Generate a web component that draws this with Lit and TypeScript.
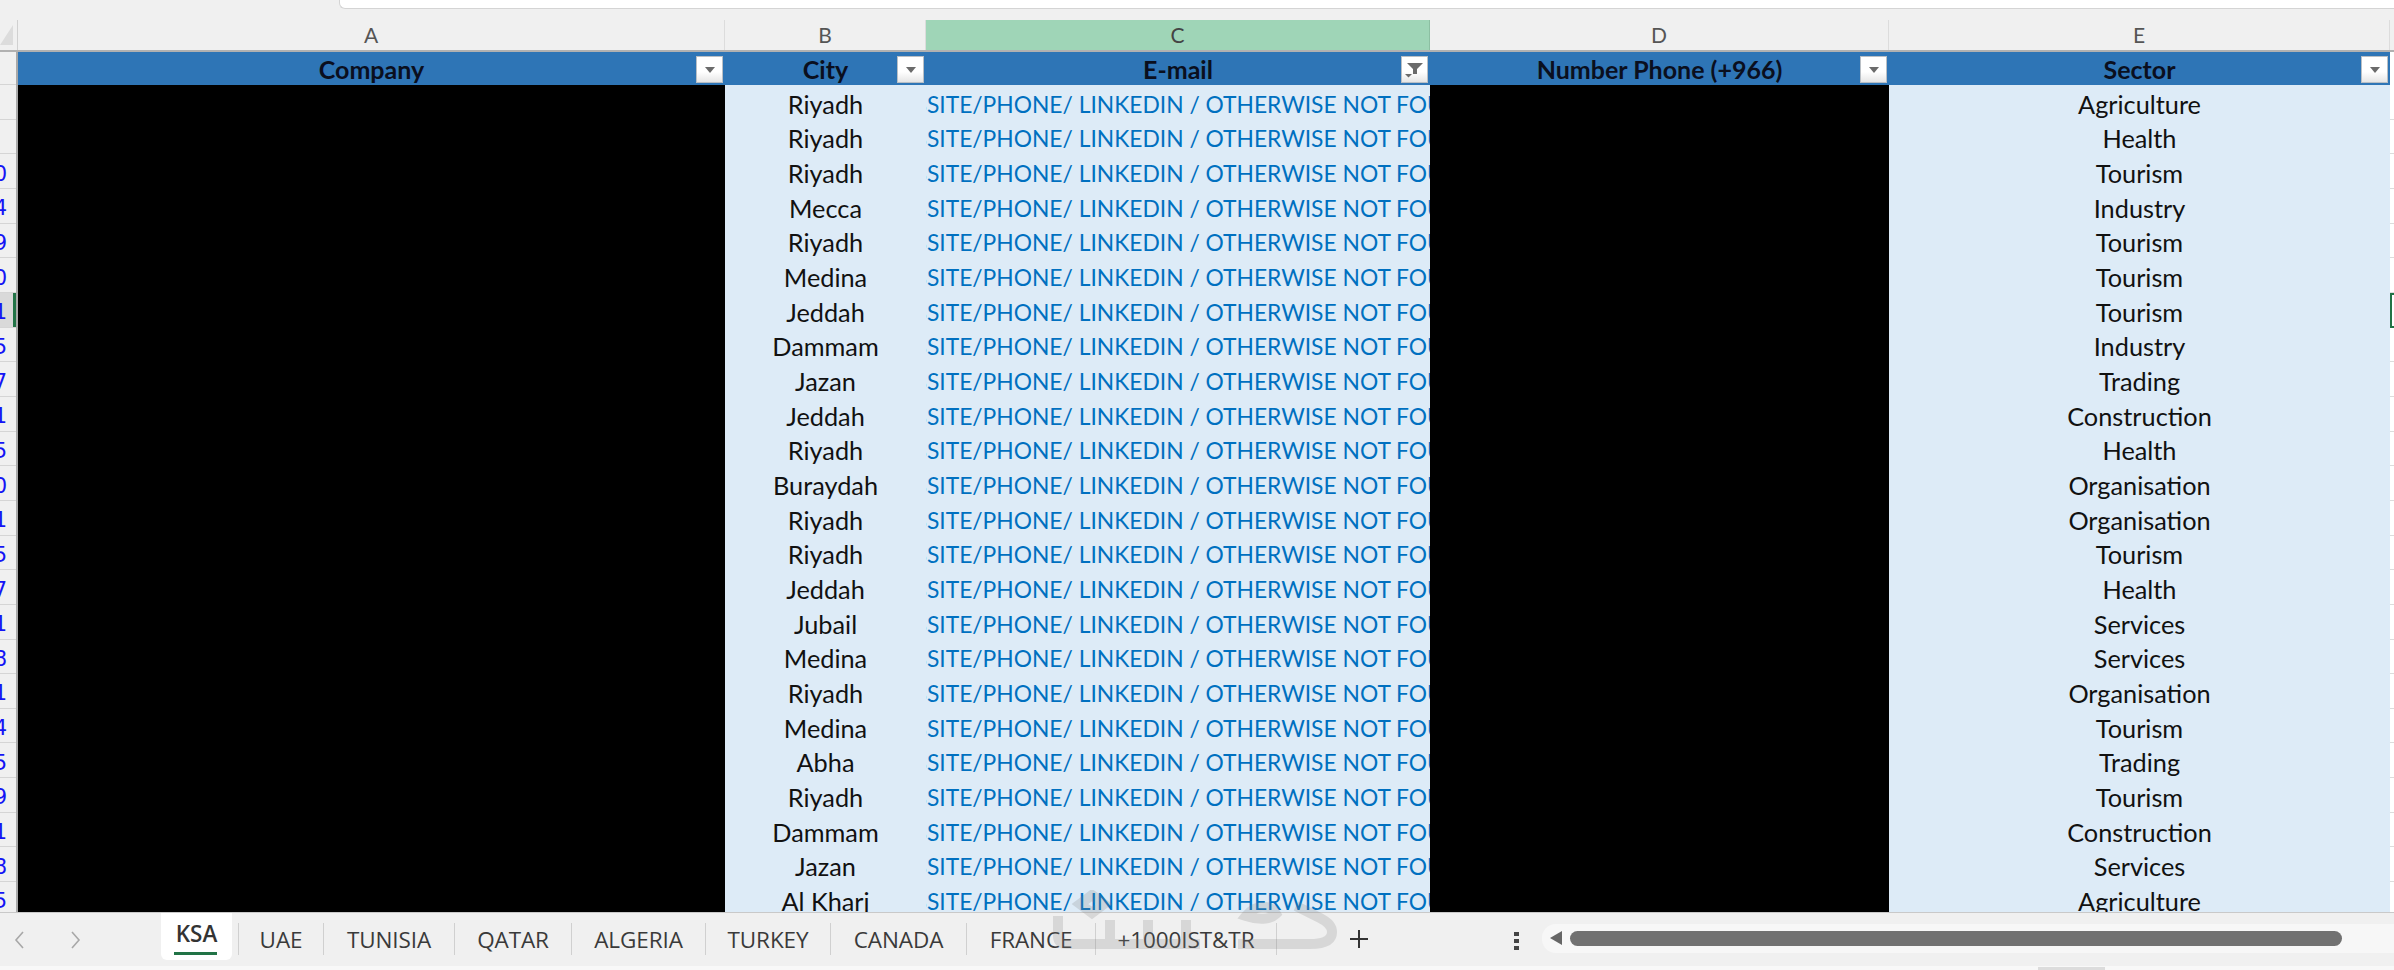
import { LitElement, html, css, svg } from "lit";
import { customElement } from "lit/decorators.js";

const cities = ["Riyadh","Riyadh","Riyadh","Mecca","Riyadh","Medina","Jeddah","Dammam","Jazan","Jeddah","Riyadh","Buraydah","Riyadh","Riyadh","Jeddah","Jubail","Medina","Riyadh","Medina","Abha","Riyadh","Dammam","Jazan","Al Kharj"];
const sectors = ["Agriculture","Health","Tourism","Industry","Tourism","Tourism","Tourism","Industry","Trading","Construction","Health","Organisation","Organisation","Tourism","Health","Services","Services","Organisation","Tourism","Trading","Tourism","Construction","Services","Agriculture"];
const nums = ["12","15","20","34","49","60","71","85","97","101","115","120","131","145","157","161","178","181","194","205","219","221","238","245"];
const tabs = [["UAE",85],["TUNISIA",131],["QATAR",117],["ALGERIA",134],["TURKEY",125],["CANADA",136],["FRANCE",129],["+1000IST&TR",182]] as const;

@customElement("app-root")
export class AppRoot extends LitElement {
  static styles = css`
    :host { display: block; width: 2394px; height: 970px; background: #f0f0f0; overflow: hidden; position: relative; font-family: Lato, "Liberation Sans", sans-serif; }
    .top { height: 20px; position: relative; }
    .formula { position: absolute; left: 339px; right: 0; top: 0; height: 9px; background: #fff; border: 1px solid #d4d4d4; border-top: 0; border-right: 0; border-bottom-left-radius: 6px; box-sizing: border-box; }
    .colhead { display: grid; grid-template-columns: 18px 707px 201px 504px 459px 501px 4px; height: 32px; border-bottom: 2px solid #b1b1b1; box-sizing: border-box; }
    .corner { position: relative; border-right: 1px solid #d0d0d0; box-sizing: border-box; }
    .tri { position: absolute; left: 0; top: 5px; width: 0; height: 0; border-left: 13px solid transparent; border-bottom: 20px solid #dcdcdc; }
    .ch { display: flex; align-items: center; justify-content: center; font-size: 21px; color: #555; border-right: 1px solid #dcdcdc; box-sizing: border-box; padding-bottom: 1px; }
    .ch.sel { background: #9fd5b7; color: #444; border-right-color: #8cbfa2; }
    .grid { display: grid; grid-template-columns: 18px 707px 201px 504px 459px 501px 4px; height: 860px; overflow: hidden; position: relative; }
    .hdr { height: 33px; background: #2e75b6; display: flex; align-items: center; justify-content: center; position: relative; font-weight: 700; font-size: 25px; color: #0a0f1e; box-sizing: border-box; }
    .edgehead { height: 33px; background: #fff; }
    .btn { position: absolute; right: 2px; top: 4px; width: 27px; height: 27px; box-sizing: border-box; background: linear-gradient(#fff 60%, #e6e6e6); border: 1px solid #b9bfc5; display: flex; align-items: center; justify-content: center; }
    .btn i { display: block; width: 0; height: 0; border-left: 5px solid transparent; border-right: 5px solid transparent; border-top: 6px solid #6b6b6b; }
    .btn svg { display: block; }
    .col { display: flex; flex-direction: column; min-width: 0; }
    .black { background: #000; }
    .blue { background: #ddebf7; }
    .rows { flex: 1; min-height: 0; overflow: hidden; }
    .cell { height: 34.67px; box-sizing: border-box; padding-top: 3px; display: flex; align-items: center; justify-content: center; white-space: nowrap; overflow: hidden; font-size: 25.3px; color: #111; }
    .cell.mail { color: #0070c0; font-size: 22.8px; }
    .rn { height: 34.67px; box-sizing: border-box; border-bottom: 1px solid #d5d5d5; font-family: "DejaVu Sans", sans-serif; font-size: 21px; color: #1414f5; display: flex; align-items: center; justify-content: flex-end; overflow: hidden; white-space: nowrap; padding-right: 9px; padding-top: 5px; }
    .rn.first { color: #66ccff; padding-right: 16px; }
    .rn.on { background: #d9d9d9; box-shadow: inset -3px 0 0 #217346; }
    .gutter { border-right: 2px solid #a9a9a9; width: 16px; }
    .gutter .rn { width: 16px; }
    .gutter .rn.head { height: 33px; }
    .edge { background: #fff; }
    .tick { height: 34.67px; box-sizing: border-box; border-bottom: 1px solid #dcdcdc; }
    .tick.on { border: 2px solid #217346; border-right: 0; box-shadow: -2px 0 0 #808080; }
    .sheet { position: absolute; left: 0; right: 0; top: 912px; height: 54px; border-top: 1px solid #c9c9c9; box-sizing: border-box; background: #f0f0f0; display: flex; align-items: flex-start; }
    .arrows { width: 161px; height: 53px; flex: none; display: flex; align-items: center; gap: 41px; padding-left: 13px; box-sizing: border-box; }
    .tab-on { flex: none; width: 71px; height: 47px; background: #fff; border-radius: 0 0 6px 6px; box-sizing: border-box; font-family: "Open Sans", sans-serif; font-size: 22.5px; font-weight: 600; color: #333; display: flex; flex-direction: column; align-items: center; position: relative; padding-top: 5px; }
    .tab-on b { position: absolute; left: 13px; right: 15px; top: 39px; height: 3px; background: #217346; }
    .tabs { display: flex; margin-left: 6px; margin-top: 10px; flex: none; }
    .tab { flex: none; height: 32px; display: flex; align-items: center; justify-content: center; font-family: "Open Sans", sans-serif; font-size: 22.5px; letter-spacing: -0.1px; color: #3a3a3a; border-left: 1px solid #d0d0d0; box-sizing: border-box; white-space: nowrap; }
    .tab:last-child { border-right: 1px solid #d0d0d0; }
    .plus { position: absolute; left: 1349px; top: 16px; }
    .dots { position: absolute; left: 1514px; top: 19px; display: flex; flex-direction: column; gap: 3px; }
    .dots i { display: block; width: 5px; height: 4px; background: #444; }
    .track { position: absolute; left: 1542px; right: 0; top: 11px; height: 29px; background: #f7f7f7; border-radius: 14px 0 0 14px; }
    .la { position: absolute; left: 8px; top: 7px; width: 0; height: 0; border-top: 7px solid transparent; border-bottom: 7px solid transparent; border-right: 12px solid #666; }
    .thumb { position: absolute; left: 28px; width: 772px; top: 7px; height: 15px; background: #717171; border-radius: 8px; }
    .base { position: absolute; left: 0; right: 0; top: 966px; height: 4px; background: #f8f8f8; }
    .nub { position: absolute; left: 2038px; width: 67px; top: 1px; height: 3px; background: #dcdcdc; }
    .mark { position: absolute; left: 1040px; top: 890px; pointer-events: none; }
  `;

  arrow(d: string) {
    return html`<svg width="14" height="24" viewBox="0 0 14 24" fill="none" stroke="#a8a8a8" stroke-width="1.6"><path d=${d}></path></svg>`;
  }

  header(label: string, filtered = false) {
    return html`<div class="hdr">${label}<span class="btn">${filtered
      ? html`<svg width="25" height="25" viewBox="0 0 25 25"><path d="M5 6h16l-6 6v5h-4v-5z" fill="#6b6b6b"></path><path d="M3 17h7l-3.500 3.500z" fill="#6b6b6b"></path></svg>`
      : html`<i></i>`}</span></div>`;
  }

  render() {
    return html`
      <div class="top"><div class="formula"></div></div>
      <div class="colhead">
        <div class="corner"><div class="tri"></div></div>
        <div class="ch">A</div><div class="ch">B</div><div class="ch sel">C</div><div class="ch">D</div><div class="ch">E</div><div></div>
      </div>
      <div class="grid">
        <div class="col">
          <div class="rows gutter">
            <div class="rn first head">1</div>
            ${nums.map((n, i) => html`<div class="rn ${i < 2 ? "first" : ""} ${i === 6 ? "on" : ""}">${n}</div>`)}
          </div>
        </div>
        <div class="col">${this.header("Company")}<div class="rows black"></div></div>
        <div class="col">${this.header("City")}<div class="rows blue">${cities.map(c => html`<div class="cell">${c}</div>`)}</div></div>
        <div class="col">${this.header("E-mail", true)}<div class="rows blue">${cities.map(() => html`<div class="cell mail">BSITE/PHONE/ LINKEDIN / OTHERWISE NOT FOU</div>`)}</div></div>
        <div class="col">${this.header("Number Phone (+966)")}<div class="rows black"></div></div>
        <div class="col">${this.header("Sector")}<div class="rows blue">${sectors.map(c => html`<div class="cell">${c}</div>`)}</div></div>
        <div class="col edge"><div class="edgehead"></div><div class="rows">${cities.map((_, i) => html`<div class="tick ${i === 6 ? "on" : ""}"></div>`)}</div></div>
      </div>
      <div class="sheet">
        <div class="arrows">${this.arrow("M10 4 3 12l7 8")}${this.arrow("M4 4l7 8-7 8")}</div>
        <div class="tab-on">KSA<b></b></div>
        <div class="tabs">${tabs.map(([t, w]) => html`<div class="tab" style="width:${w}px">${t}</div>`)}</div>
        <svg class="plus" width="20" height="20" viewBox="0 0 20 20" stroke="#333" stroke-width="2"><path d="M10 1v18M1 10h18"></path></svg>
        <div class="dots"><i></i><i></i><i></i></div>
        <div class="track"><div class="la"></div><div class="thumb"></div></div>
      </div>
      <div class="base"><div class="nub"></div></div>
      <svg class="mark" width="310" height="70" viewBox="0 0 310 70" fill="none" stroke="#808080" stroke-opacity=".22" stroke-width="10">
        ${svg`<path d="M18 26V46q0 8 9 8H160M70 30V54M108 30V54M146 30V54M40 14l12-9 12 9-12 9zM198 54H270q22 0 22-12 0-8-12-14L256 16M206 26c10-12 24-12 30-2-6 6-18 6-30 2z"></path>`}
      </svg>
    `;
  }
}
